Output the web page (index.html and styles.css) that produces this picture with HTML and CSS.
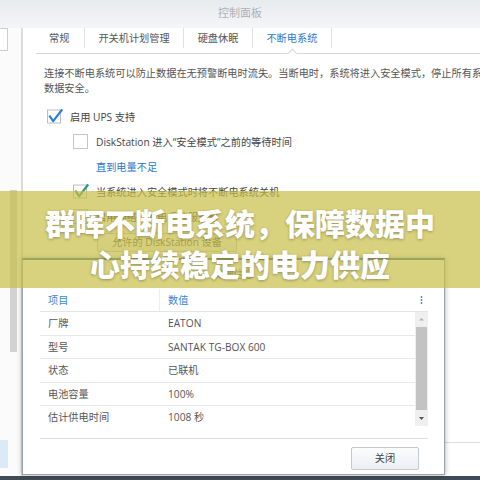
FILE: index.html
```html
<!DOCTYPE html>
<html lang="zh-CN">
<head>
<meta charset="utf-8">
<title>控制面板</title>
<link rel="stylesheet" href="styles.css">
</head>
<body>
<div class="titlebar">控制面板</div>
<div class="main">
  <div class="sidebar">
    <div class="search"></div>
    <div class="side-scroll"></div>
    <div class="side-sel"></div>
  </div>
  <div class="content">
    <div class="tabs">
      <div class="tab">常规</div>
      <div class="tab">开关机计划管理</div>
      <div class="tab">硬盘休眠</div>
      <div class="tab active">不断电系统</div>
    </div>
    <div class="body">
      <p class="desc">连接不断电系统可以防止数据在无预警断电时流失。当断电时，系统将进入安全模式，停止所有系统服务并卸载存储空间，以确保<br>数据安全。</p>
      <div class="row first">
        <svg class="cb" width="16" height="16" viewBox="0 0 16 16"><rect x="0.5" y="2" width="13" height="13" fill="#fff" stroke="#b9bec4"/><path d="M2.3 7.6 L6.2 13.2 L15.2 1.4" fill="none" stroke="#2b7fd5" stroke-width="2.2" stroke-linejoin="round"/></svg>
        <span>启用 UPS 支持</span>
      </div>
      <div class="row sub">
        <svg class="cb" width="16" height="16" viewBox="0 0 16 16"><rect x="0.5" y="1.5" width="14" height="14" fill="#fff" stroke="#c3c7cc"/></svg>
        <span>DiskStation 进入“安全模式”之前的等待时间</span>
      </div>
      <div class="row link">直到电量不足</div>
      <div class="row sub">
        <svg class="cb" width="16" height="16" viewBox="0 0 16 16"><rect x="0.5" y="2" width="13" height="13" fill="#fff" stroke="#b9bec4"/><path d="M2.3 7.6 L6.2 13.2 L15.2 1.4" fill="none" stroke="#2b9a7a" stroke-width="2.2" stroke-linejoin="round"/></svg>
        <span>当系统进入安全模式时将不断电系统关机</span>
      </div>
      <div class="row sub">
        <svg class="cb" width="16" height="16" viewBox="0 0 16 16"><rect x="0.5" y="1.5" width="14" height="14" fill="#fff" stroke="#c3c7cc"/></svg>
        <span>启用网络不断电系统服务器</span>
      </div>
      <div class="btnrow"><div class="btn">允许的 DiskStation 设备</div></div>
    </div>
    <div class="footer"></div>
  </div>
</div>
<div class="bottombar"></div>

<div class="dialog">
  <div class="dlg-title">详细信息</div>
  <div class="dlg-body">
    <div class="grid">
      <div class="ghead">
        <div class="c1">项目</div>
        <div class="c2">数值</div>
        <div class="c3"><svg width="13" height="22" viewBox="0 0 13 22"><circle cx="6.5" cy="8" r="0.9" fill="#3b85cf"/><circle cx="6.5" cy="11" r="0.9" fill="#3b85cf"/><circle cx="6.5" cy="14" r="0.9" fill="#3b85cf"/></svg></div>
      </div>
      <div class="gbody">
        <div class="rows">
          <div class="grow"><div class="c1">厂牌</div><div class="c2">EATON</div></div>
          <div class="grow"><div class="c1">型号</div><div class="c2">SANTAK TG-BOX 600</div></div>
          <div class="grow"><div class="c1">状态</div><div class="c2">已联机</div></div>
          <div class="grow"><div class="c1">电池容量</div><div class="c2">100%</div></div>
          <div class="grow"><div class="c1">估计供电时间</div><div class="c2">1008 秒</div></div>
        </div>
        <div class="vscroll">
          <div class="vs-up"><svg width="13" height="15" viewBox="0 0 13 15"><path d="M4 8.5 L6.5 6 L9 8.5 Z" fill="#b3b3b3"/></svg></div>
          <div class="vs-thumb"></div>
          <div class="vs-down"><svg width="13" height="16" viewBox="0 0 13 16"><path d="M4 7 L9 7 L6.5 10 Z" fill="#555"/></svg></div>
        </div>
      </div>
    </div>
    <div class="dlg-foot"><div class="btn-close">关闭</div></div>
  </div>
</div>

<div class="banner">群晖不断电系统，保障数据中心持续稳定的电力供应</div>
</body>
</html>
```

FILE: styles.css
```css
* { box-sizing: border-box; }
html, body { margin: 0; padding: 0; }
body {
  width: 480px;
  height: 480px;
  overflow: hidden;
  position: relative;
  background: #fff;
  font-family: "Open Sans", "Noto Sans CJK SC", sans-serif;
  font-size: 10.2px;
  color: #555;
}
.titlebar {
  height: 28px;
  line-height: 26px;
  text-align: center;
  color: #adb2b7;
  font-size: 11px;
  background: linear-gradient(#e8ebee, #f4f5f7);
}
.main { display: flex; height: 448px; }
.sidebar {
  width: 23px;
  border-right: 2px solid #d9dcdf;
  background: #fbfbfb;
  display: flex;
  flex-direction: column;
}
.search {
  width: 8px;
  height: 23px;
  border: 1px solid #c9ced3;
  border-left: none;
  background: #fff;
}
.side-scroll {
  margin: 139px 0 0 10px;
  width: 7px;
  height: 162px;
  background: #d2d2d2;
}
.side-sel {
  margin-top: 88px;
  width: 8px;
  height: 28px;
  background: #dce9f7;
}
.content { flex: 1; display: flex; flex-direction: column; min-width: 0; }
.tabs {
  display: flex;
  margin-left: 13px;
  height: 26px;
  padding-bottom: 5px;
  border-bottom: 1px solid #d6d9dc;
}
.tab {
  position: relative;
  height: 20px;
  line-height: 20px;
  padding: 0 13.5px;
  border-right: 1px solid #dfe2e5;
  color: #555;
  white-space: nowrap;
}
.tab:first-child { padding-left: 13px; padding-right: 14.5px; }
.tab.active { color: #2a7bd0; }
.tab.active::after {
  content: "";
  position: absolute;
  left: calc(50% - 3px);
  top: 22px;
  width: 6px;
  height: 6px;
  background: #fff;
  border-left: 1px solid #d6d9dc;
  border-top: 1px solid #d6d9dc;
  transform: rotate(45deg);
}
.body { flex: 1; padding: 12px 0 0 21px; overflow: hidden; }
.desc { margin: 0; line-height: 15px; white-space: nowrap; color: #555; }
.row {
  display: flex;
  align-items: center;
  height: 25px;
  gap: 7px;
  color: #444;
  white-space: nowrap;
}
.row.first { margin-top: 7.5px; padding-left: 3px; }
.row.sub { padding-left: 29px; }
.row.link { padding-left: 52px; color: #2b78c8; }
.cb { flex: none; }
.btnrow { padding: 4.5px 0 0 53px; }
.btn {
  width: 140px;
  height: 19px;
  border: 1px solid #c5cad0;
  border-radius: 2px;
  background: linear-gradient(#fdfdfd, #eef0f2);
  text-align: center;
  line-height: 17px;
  color: #555;
}
.footer { height: 34px; border-top: 1px solid #dadde0; }
.bottombar { height: 4px; background: #3f4b56; }

.dialog {
  position: absolute;
  left: 22px;
  top: 258px;
  width: 423px;
  height: 217px;
  background: #fff;
  border: 1px solid #9aa2aa;
  border-top: 2px solid #2e6e9e;
  box-shadow: 0 0 5px rgba(0, 0, 0, 0.35);
  display: flex;
  flex-direction: column;
}
.dlg-title {
  height: 29px;
  line-height: 29px;
  text-align: center;
  font-size: 10px;
  color: #666;
}
.dlg-body {
  flex: 1;
  padding: 0 16px 0 17px;
  display: flex;
  flex-direction: column;
}
.grid { height: 150px; border-bottom: 1px solid #dcdfe2; }
.ghead {
  display: flex;
  height: 23px;
  line-height: 22px;
  border-bottom: 1px solid #e2e5e8;
  color: #3b85cf;
}
.c1 { width: 120px; padding-left: 8px; white-space: nowrap; }
.ghead .c1 { border-right: 1px solid #eceef0; }
.c2 { flex: 1; padding-left: 8px; white-space: nowrap; }
.c3 { width: 13px; display: flex; }
.gbody { display: flex; height: 126px; }
.rows { flex: 1; }
.grow {
  display: flex;
  height: 23.5px;
  line-height: 22.5px;
  border-bottom: 1px solid #e6e8eb;
  color: #555;
}
.grow:last-child { border-bottom: none; }
.vscroll {
  width: 13px;
  height: 114px;
  background: #efefef;
  display: flex;
  flex-direction: column;
}
.vs-up { height: 15px; display: flex; }
.vs-thumb { height: 83px; margin: 0 1px; background: #c3c3c3; }
.vs-down { height: 16px; display: flex; }
.dlg-foot {
  flex: 1;
  display: flex;
  justify-content: flex-end;
  align-items: flex-start;
  padding: 8px 9px 0 0;
}
.btn-close {
  width: 68px;
  height: 23px;
  border: 1px solid #c4c9ce;
  border-radius: 2px;
  background: linear-gradient(#fbfcfd, #eceff2);
  text-align: center;
  line-height: 21px;
  color: #444;
}

.banner {
  position: absolute;
  left: 0;
  top: 191px;
  width: 480px;
  height: 97px;
  padding: 6px 40px 0;
  background: rgba(200, 190, 70, 0.7);
  display: flex;
  align-items: center;
  justify-content: center;
  text-align: center;
  color: #fff;
  font-family: "Noto Sans CJK SC", sans-serif;
  font-weight: 900;
  font-size: 30px;
  line-height: 41px;
  text-shadow: 0 1px 3px rgba(0, 0, 0, 0.3);
}
```
